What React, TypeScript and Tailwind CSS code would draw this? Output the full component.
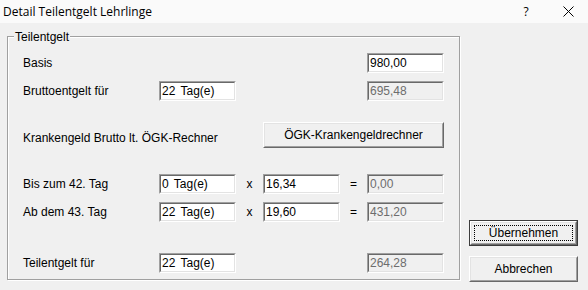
const ui = "font-['Liberation_Sans',Arial,sans-serif] text-[12px] leading-none text-black";

function Field({ value, readOnly = false }: { value: string; readOnly?: boolean }) {
  return (
    <div className="w-[77px] h-[20px] border border-t-[#a0a0a0] border-l-[#a0a0a0] border-b-white border-r-white">
      <div
        className={`h-full border border-t-[#696969] border-l-[#696969] border-b-[#e3e3e3] border-r-[#e3e3e3] flex items-center pl-[1px] whitespace-pre [word-spacing:2px] ${
          readOnly ? "bg-[#f0f0f0] text-[#6d6d6d]" : "bg-white text-black"
        }`}
      >
        {value}
      </div>
    </div>
  );
}

function Button({ label, width, isDefault = false }: { label: string; width: string; isDefault?: boolean }) {
  return (
    <div className={`${width} ${isDefault ? "border border-[#3c3c3c]" : ""}`}>
      <div className="h-full border border-t-white border-l-white border-b-[#696969] border-r-[#696969]">
        <div className="h-full border border-t-[#e3e3e3] border-l-[#e3e3e3] border-b-[#a0a0a0] border-r-[#a0a0a0] bg-[#f0f0f0] flex items-center justify-center p-[2px]">
          <div
            className={`w-full h-full flex items-center justify-center ${
              isDefault ? "border border-dotted border-black" : ""
            }`}
          >
            {label}
          </div>
        </div>
      </div>
    </div>
  );
}

function Row({ label, children, className = "" }: { label: string; children?: React.ReactNode; className?: string }) {
  return (
    <div className={`flex items-center h-[20px] ${className}`}>
      <div className="w-[136px]">{label}</div>
      {children}
    </div>
  );
}

export default function App() {
  return (
    <div className={`${ui} w-[588px] h-[290px] bg-[#f0f0f0] flex flex-col overflow-hidden`}>
      {/* title bar */}
      <div className="h-[23px] bg-[#fafafa] flex items-center pl-[3px] font-['Open_Sans',Arial,sans-serif] text-[12px]">
        <span className="flex-1">Detail Teilentgelt Lehrlinge</span>
        <span className="w-[44px] text-center">?</span>
        <span className="w-[40px] flex justify-center">
          <svg width="11" height="11" viewBox="0 0 11 11">
            <path d="M0.5 0.5L10.5 10.5M10.5 0.5L0.5 10.5" stroke="#000" strokeWidth="1" />
          </svg>
        </span>
      </div>

      <div className="flex">
        {/* group box */}
        <div className="relative ml-[7px] mt-[13px] w-[453px] h-[244px] border border-[#a0a0a0] shadow-[inset_1px_1px_0_#fff,1px_1px_0_#fff]">
          <div className="absolute left-[6px] -top-[7px] bg-[#f0f0f0] px-[1px] h-[14px] flex items-center">Teilentgelt</div>

          <div className="flex flex-col pl-[15px] pt-[16px]">
            <Row label="Basis">
              <div className="ml-[208px]">
                <Field value="980,00" />
              </div>
            </Row>

            <Row label="Bruttoentgelt für" className="mt-[8px]">
              <Field value="22 Tag(e)" />
              <div className="ml-[131px]">
                <Field value="695,48" readOnly />
              </div>
            </Row>

            <div className="flex items-center mt-[21px] h-[26px]">
              <div className="w-[240px] pt-[5px]">Krankengeld Brutto lt. ÖGK-Rechner</div>
              <Button label="ÖGK-Krankengeldrechner" width="w-[181px] h-[26px]" />
            </div>

            <Row label="Bis zum 42. Tag" className="mt-[26px]">
              <Field value="0 Tag(e)" />
              <div className="w-[27px] text-center">x</div>
              <Field value="16,34" />
              <div className="w-[27px] text-center">=</div>
              <Field value="0,00" readOnly />
            </Row>

            <Row label="Ab dem 43. Tag" className="mt-[8px]">
              <Field value="22 Tag(e)" />
              <div className="w-[27px] text-center">x</div>
              <Field value="19,60" />
              <div className="w-[27px] text-center">=</div>
              <Field value="431,20" readOnly />
            </Row>

            <Row label="Teilentgelt für" className="mt-[31px]">
              <Field value="22 Tag(e)" />
              <div className="ml-[131px]">
                <Field value="264,28" readOnly />
              </div>
            </Row>
          </div>
        </div>

        {/* side buttons */}
        <div className="flex flex-col ml-[9px] mt-[197px] gap-[10px]">
          <Button label="Übernehmen" width="w-[109px] h-[26px]" isDefault />
          <Button label="Abbrechen" width="w-[109px] h-[26px]" />
        </div>
      </div>
    </div>
  );
}
